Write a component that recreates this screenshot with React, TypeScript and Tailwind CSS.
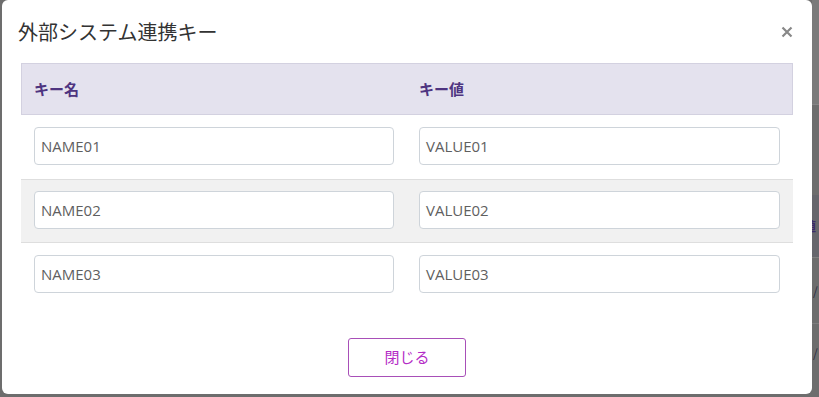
import React from "react";

const jp = { fontFamily: '"Noto Sans CJK JP", "Noto Sans", sans-serif' };
const latin = { fontFamily: '"Open Sans", "Noto Sans CJK JP", sans-serif' };

export default function App() {
  const rows = [
    ["NAME01", "VALUE01"],
    ["NAME02", "VALUE02"],
    ["NAME03", "VALUE03"],
  ];
  return (
    <div className="w-[819px] h-[397px] bg-[#6d6d6d] flex overflow-hidden" style={jp}>
      <div className="ml-[2px] w-[810px] h-[394px] shrink-0 bg-white rounded-[6px] flex flex-col">
        <div className="h-[63px] flex items-center justify-between pl-[16px] pr-[19px]">
          <span className="text-[20px] leading-none text-[#333333] pt-[1px]">外部システム連携キー</span>
          <svg width="12" height="12" viewBox="0 0 12 12" className="mt-[1px]">
            <path d="M1.5 1.5 L10.5 10.5 M10.5 1.5 L1.5 10.5" stroke="#888888" strokeWidth="2.2" strokeLinecap="butt" />
          </svg>
        </div>
        <div className="mx-[19px]">
          <div className="h-[52px] bg-[#e4e2ee] border border-[#d3d1e0] grid grid-cols-[385px_1fr] items-center">
            <div className="pl-[12px] text-[15px] font-bold text-[#4e3480]">キー名</div>
            <div className="pl-[12px] text-[15px] font-bold text-[#4e3480]">キー値</div>
          </div>
          {rows.map(([n, v], i) => (
            <div
              key={n}
              className={
                "h-[64px] grid grid-cols-[386px_1fr] " +
                (i === 1 ? "bg-[#f1f1f1] border-y border-[#dedede] pt-[11px]" : "pt-[12px]")
              }
            >
              <div className="pl-[13px]">
                <div
                  className="w-[360px] h-[38px] bg-white border border-[#ced4da] rounded-[4px] flex items-center pl-[6px] text-[15px] text-[#5f5f5f]"
                  style={latin}
                >
                  {n}
                </div>
              </div>
              <div className="pl-[12px]">
                <div
                  className="w-[361px] h-[38px] bg-white border border-[#ced4da] rounded-[4px] flex items-center pl-[6px] text-[15px] text-[#5f5f5f]"
                  style={latin}
                >
                  {v}
                </div>
              </div>
            </div>
          ))}
        </div>
        <div className="flex justify-center mt-[31px]">
          <button className="w-[118px] h-[39px] border border-[#a84fb8] rounded-[3px] text-[15px] text-[#b42cc6] bg-white flex items-center justify-center">
            閉じる
          </button>
        </div>
      </div>
      <div className="flex-1 flex flex-col overflow-hidden">
        <div className="h-[105px] bg-[#7a7a7a] border-b border-[#858585]" />
        <div className="h-[90px] bg-[#6d6d6d]" />
        <div className="h-[63px] bg-[#66666c] border-b border-[#808080] flex items-center overflow-hidden">
          <span className="-ml-[9px] text-[13px] font-bold text-[#3a2a6a] whitespace-nowrap">値</span>
        </div>
        <div className="h-[66px] bg-[#6d6d6d] border-b border-[#7d7d7d] flex items-center overflow-hidden">
          <span className="ml-[1px] text-[12px] text-[#2a2a40]">/</span>
        </div>
        <div className="flex-1 bg-[#6d6d6d] flex items-start pt-[20px] overflow-hidden">
          <span className="ml-[1px] text-[12px] text-[#2a2a40]">/</span>
        </div>
      </div>
    </div>
  );
}
